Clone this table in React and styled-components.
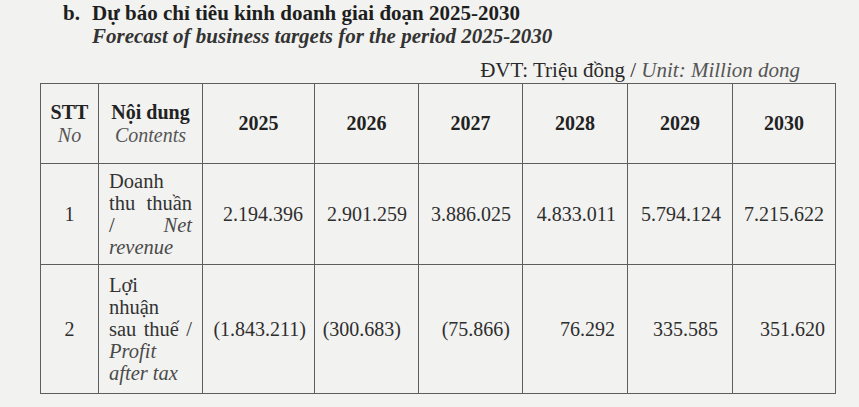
import styled, { createGlobalStyle } from "styled-components";

const GlobalStyle = createGlobalStyle`
  html, body {
    margin: 0;
    padding: 0;
    background: #f2f2f0;
  }
  body {
    font-family: "Liberation Serif", "Times New Roman", serif;
    color: #2c2c2c;
  }
`;

const Page = styled.div`
  width: 859px;
  height: 407px;
  overflow: hidden;
  box-sizing: border-box;
  padding: 2px 0 0 40px;
`;

const Heading = styled.div`
  display: flex;
  margin-left: 23px;
  font-size: 21px;
`;

const Label = styled.div`
  width: 29px;
  font-weight: bold;
  line-height: 23px;
  color: #1e1e1e;
`;

const TitleBlock = styled.div`
  display: flex;
  flex-direction: column;
`;

const Title = styled.div`
  font-weight: bold;
  line-height: 23px;
  color: #1e1e1e;
`;

const Subtitle = styled.div`
  font-style: italic;
  font-weight: bold;
  line-height: 23px;
  color: #333;
`;

const Unit = styled.div`
  width: 760px;
  text-align: right;
  font-size: 21px;
  line-height: 23px;
  margin-top: 11px;
  margin-bottom: 1px;
  color: #2a2a2a;

  em {
    color: #555;
  }
`;

const Table = styled.table`
  width: 795px;
  border-collapse: collapse;
  table-layout: fixed;
  font-size: 20px;
`;

const Row = styled.tr`
  height: ${(p) => p.$height}px;
`;

const Cell = styled.td`
  border: 1px solid #5e5e5e;
  padding: 0 ${(p) => p.$pad ?? 0}px 0 0;
  text-align: ${(p) => p.$align || "center"};
  vertical-align: middle;
  line-height: 23px;
  font-weight: ${(p) => (p.$bold ? "bold" : "normal")};
  color: ${(p) => (p.$bold ? "#222" : "#2e2e2e")};
`;

const ContentCell = styled.td`
  border: 1px solid #5e5e5e;
  padding: 0 10px;
  vertical-align: middle;
  line-height: 22px;
  font-size: 20.5px;
  color: #333;
`;

const Line = styled.div`
  display: flex;
  justify-content: ${(p) => (p.$spread ? "space-between" : "flex-start")};
  font-style: ${(p) => (p.$italic ? "italic" : "normal")};
  color: ${(p) => (p.$italic ? "#4a4a4a" : "#333")};

  em {
    color: #4a4a4a;
  }
`;

const HeadLine = styled.div`
  text-align: center;
  font-weight: ${(p) => (p.$italic ? "normal" : "bold")};
  font-style: ${(p) => (p.$italic ? "italic" : "normal")};
  color: ${(p) => (p.$italic ? "#555" : "#222")};
`;

const widths = [58, 104, 112, 104, 104, 105, 105, 103];
const years = ["2025", "2026", "2027", "2028", "2029", "2030"];

const revenue = ["2.194.396", "2.901.259", "3.886.025", "4.833.011", "5.794.124", "7.215.622"];
const profit = [
  { v: "(1.843.211)", pad: 8 },
  { v: "(300.683)", pad: 17 },
  { v: "(75.866)", pad: 12 },
  { v: "76.292", pad: 12 },
  { v: "335.585", pad: 14 },
  { v: "351.620", pad: 10 },
];

export default function App() {
  return (
    <>
      <GlobalStyle />
      <Page>
        <Heading>
          <Label>b.</Label>
          <TitleBlock>
            <Title>Dự báo chỉ tiêu kinh doanh giai đoạn 2025-2030</Title>
            <Subtitle>Forecast of business targets for the period 2025-2030</Subtitle>
          </TitleBlock>
        </Heading>

        <Unit>
          ĐVT: Triệu đồng / <em>Unit: Million dong</em>
        </Unit>

        <Table>
          <colgroup>
            {widths.map((w, i) => (
              <col key={i} style={{ width: w }} />
            ))}
          </colgroup>
          <tbody>
            <Row $height={80}>
              <Cell>
                <HeadLine>STT</HeadLine>
                <HeadLine $italic>No</HeadLine>
              </Cell>
              <Cell>
                <HeadLine>Nội dung</HeadLine>
                <HeadLine $italic>Contents</HeadLine>
              </Cell>
              {years.map((y) => (
                <Cell key={y} $bold>
                  {y}
                </Cell>
              ))}
            </Row>

            <Row $height={101}>
              <Cell>1</Cell>
              <ContentCell>
                <Line>Doanh</Line>
                <Line $spread>
                  <span>thu</span>
                  <span>thuần</span>
                </Line>
                <Line $spread>
                  <span>/</span>
                  <em>Net</em>
                </Line>
                <Line $italic>revenue</Line>
              </ContentCell>
              {revenue.map((v) => (
                <Cell key={v} $align="right" $pad={11}>
                  {v}
                </Cell>
              ))}
            </Row>

            <Row $height={129}>
              <Cell>2</Cell>
              <ContentCell>
                <Line>Lợi</Line>
                <Line>nhuận</Line>
                <Line $spread>
                  <span>sau</span>
                  <span>thuế</span>
                  <span>/</span>
                </Line>
                <Line $italic>Profit</Line>
                <Line $italic>after tax</Line>
              </ContentCell>
              {profit.map(({ v, pad }) => (
                <Cell key={v} $align="right" $pad={pad}>
                  {v}
                </Cell>
              ))}
            </Row>
          </tbody>
        </Table>
      </Page>
    </>
  );
}
